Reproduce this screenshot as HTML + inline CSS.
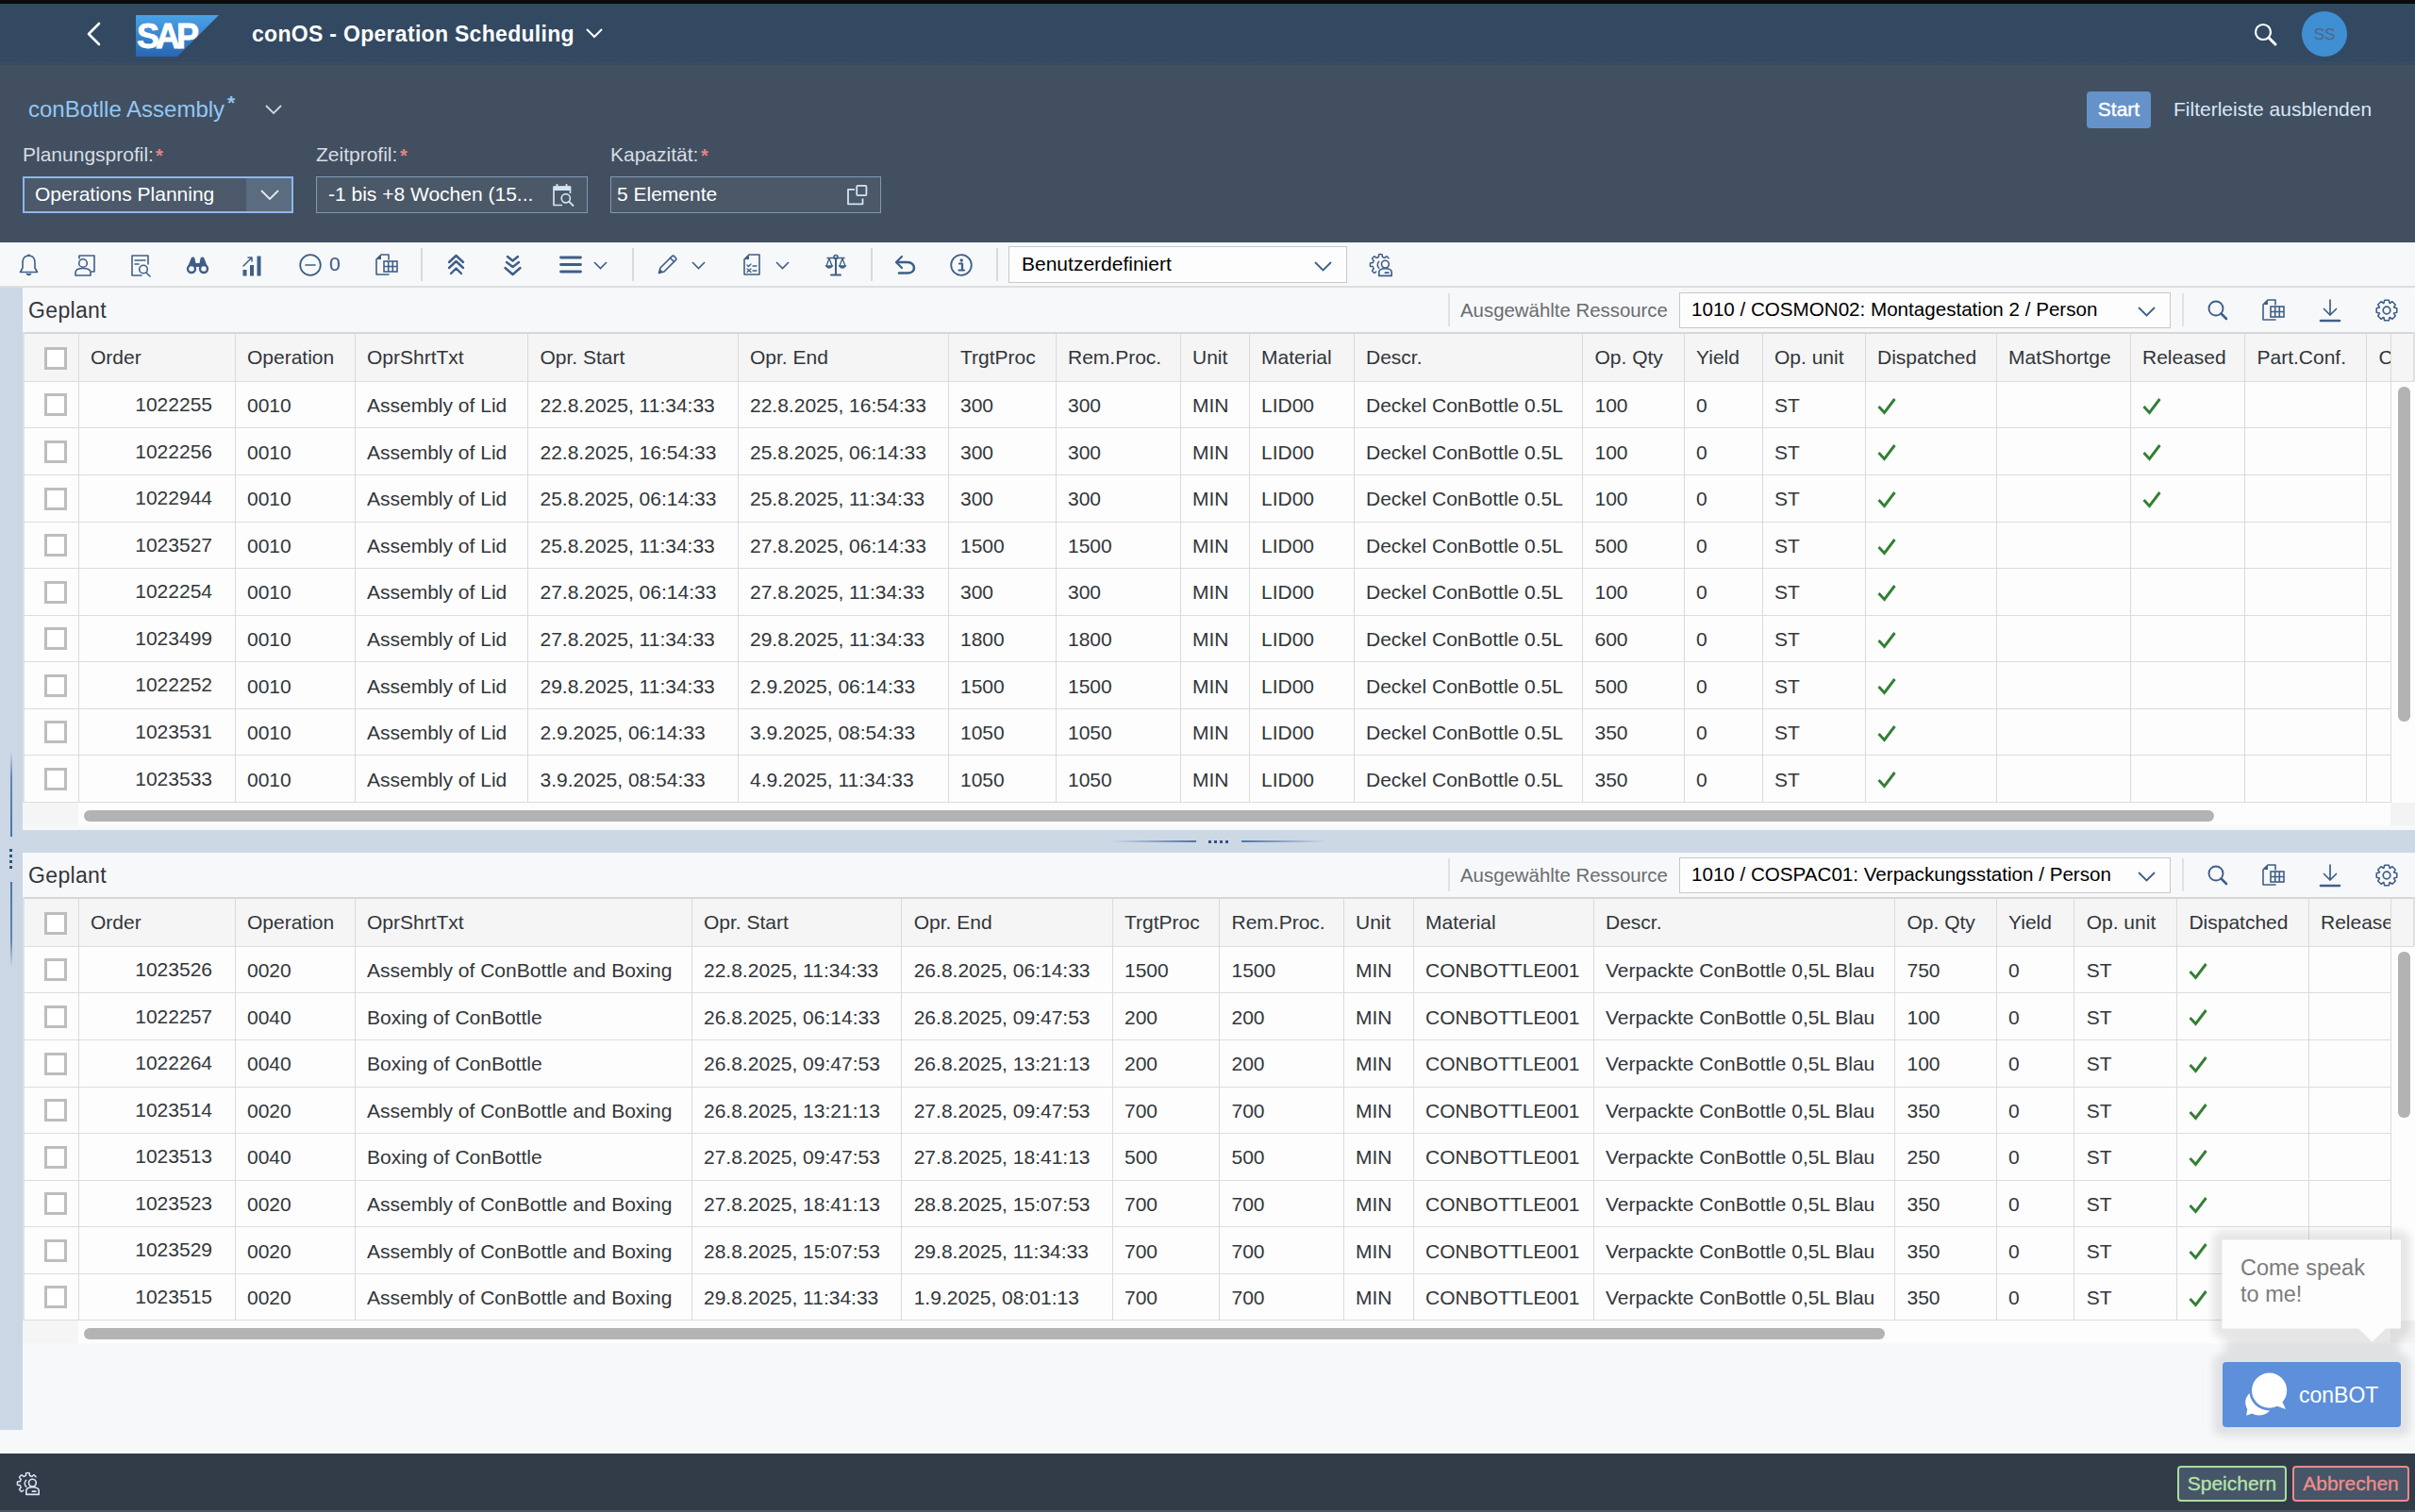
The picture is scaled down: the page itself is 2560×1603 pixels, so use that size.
<!DOCTYPE html><html><head><meta charset="utf-8"><style>
*{box-sizing:border-box;margin:0;padding:0}
html,body{width:2560px;height:1603px;overflow:hidden;background:#f7f8fa;font-family:"Liberation Sans", sans-serif;color:#32363a}
.a{position:absolute}
.t{position:absolute;white-space:nowrap;font-size:21px;line-height:24px}
svg{position:absolute;overflow:visible}
</style></head><body><div class="a" style="left:0;top:0;width:2560px;height:4px;background:#0a0a0a"></div>
<div class="a" style="left:0;top:4px;width:2560px;height:64px;background:#334962"></div>
<div class="a" style="left:0;top:62px;width:2560px;height:7px;background:#364c65"></div>
<div class="a" style="left:0;top:63px;width:2560px;height:2px;background:repeating-linear-gradient(90deg,#314760 0 2px,#364c65 2px 3px)"></div>
<svg style="left:90px;top:22px" width="20" height="28" viewBox="0 0 20 28"><path d="M15 3 L4 14 L15 25" fill="none" stroke="#fff" stroke-width="2.6" stroke-linecap="round" stroke-linejoin="round"/></svg>
<svg style="left:144px;top:16px" width="88" height="44" viewBox="0 0 88 44">
<defs><linearGradient id="sg" x1="0" y1="0" x2="0" y2="1"><stop offset="0" stop-color="#4aa3e6"/><stop offset="1" stop-color="#2866b4"/></linearGradient></defs>
<path d="M0 0 H88 L44 44 H0 Z" fill="url(#sg)"/>
<text x="1" y="35" font-family="Liberation Sans" font-weight="bold" font-size="36" fill="#fff" stroke="#fff" stroke-width="0.8" letter-spacing="-4.0">SAP</text>
</svg>
<div class="t" style="left:267px;top:22px;font-size:23px;line-height:28px;font-weight:bold;color:#fff;letter-spacing:0.3px">conOS - Operation Scheduling</div>
<svg style="left:621px;top:29px" width="18" height="12" viewBox="0 0 18 12"><path d="M1 2 L9 10 L17 2" fill="none" stroke="#fff" stroke-width="2"/></svg>
<svg style="left:2389px;top:24px" width="25" height="25" viewBox="0 0 25 25"><circle cx="10" cy="10" r="8" fill="none" stroke="#fff" stroke-width="2.2"/><path d="M16 16 L23 23" stroke="#fff" stroke-width="3" stroke-linecap="round"/></svg>
<div class="a" style="left:2440px;top:12px;width:48px;height:48px;border-radius:50%;background:#3f8fd2"></div>
<div class="t" style="left:2440px;top:25px;width:48px;text-align:center;font-size:17px;color:#4f6680">SS</div>
<div class="a" style="left:0;top:69px;width:2560px;height:188px;background:#424f60"></div>
<div class="t" style="left:30px;top:101px;font-size:24px;line-height:30px;color:#91c8f6">conBotlle Assembly</div>
<div class="t" style="left:241px;top:97px;font-size:21px;font-weight:bold;color:#91c8f6">*</div>
<svg style="left:281px;top:111px" width="18" height="11" viewBox="0 0 18 11"><path d="M1 1 L9 9 L17 1" fill="none" stroke="#d0d6dd" stroke-width="1.8"/></svg>
<div class="t" style="left:24px;top:152px;color:#d7dde3">Planungsprofil:</div>
<div class="t" style="left:165px;top:153px;font-size:20px;color:#e08585;font-weight:bold">*</div>
<div class="t" style="left:335px;top:152px;color:#d7dde3">Zeitprofil:</div>
<div class="t" style="left:424px;top:153px;font-size:20px;color:#e08585;font-weight:bold">*</div>
<div class="t" style="left:647px;top:152px;color:#d7dde3">Kapazität:</div>
<div class="t" style="left:743px;top:153px;font-size:20px;color:#e08585;font-weight:bold">*</div>
<div class="a" style="left:24px;top:187px;width:287px;height:39px;background:#4b596b;border:2px solid #8cb7ea"></div>
<div class="a" style="left:261px;top:189px;width:48px;height:35px;background:#5b6c80"></div>
<div class="t" style="left:37px;top:194px;color:#fff">Operations Planning</div>
<svg style="left:276px;top:201px" width="20" height="12" viewBox="0 0 20 12"><path d="M1 1 L10 10 L19 1" fill="none" stroke="#e6ebf0" stroke-width="1.8"/></svg>
<div class="a" style="left:335px;top:187px;width:288px;height:39px;background:#4a5868;border:1.5px solid #8199b5"></div>
<div class="t" style="left:348px;top:194px;color:#fff">-1 bis +8 Wochen (15...</div>
<svg style="left:585px;top:194px" width="25" height="25" viewBox="0 0 25 25"><path d="M11 23.5 H2 V4 H19.5 V11" fill="none" stroke="#d3e4f6" stroke-width="1.7" stroke-linejoin="round"/><rect x="2" y="3.5" width="17.5" height="4.5" fill="#d3e4f6"/><path d="M5.5 1 V4 M15.5 1 V4" stroke="#d3e4f6" stroke-width="1.8"/><circle cx="14.8" cy="16.3" r="4.6" fill="none" stroke="#d3e4f6" stroke-width="1.7"/><path d="M18.2 19.7 L22.5 24" stroke="#d3e4f6" stroke-width="1.8" stroke-linecap="round"/></svg>
<div class="a" style="left:647px;top:187px;width:287px;height:39px;background:#4a5868;border:1.5px solid #8199b5"></div>
<div class="t" style="left:654px;top:194px;color:#fff">5 Elemente</div>
<svg style="left:897px;top:196px" width="23" height="22" viewBox="0 0 23 22"><path d="M9 4.8 H2 V20.3 H17.5 V14.5" fill="none" stroke="#d3e4f6" stroke-width="1.8" stroke-linejoin="round"/><rect x="11.2" y="0.9" width="10.2" height="10.2" rx="1" fill="none" stroke="#d3e4f6" stroke-width="1.8"/></svg>
<div class="a" style="left:2212px;top:97px;width:68px;height:39px;border-radius:4px;background:#6593c9"></div>
<div class="t" style="left:2212px;top:104px;width:68px;text-align:center;color:#fff;-webkit-text-stroke:0.4px #fff">Start</div>
<div class="t" style="left:2304px;top:104px;color:#d6e7f8">Filterleiste ausblenden</div>
<div class="a" style="left:0;top:257px;width:2560px;height:47px;background:#f7f8fa"></div>
<div class="a" style="left:0;top:303px;width:2560px;height:2px;background:#dcdee0"></div>
<svg style="left:20px;top:269px" width="21" height="24" viewBox="0 0 21 24"><path d="M10.5 2 C5.5 2 4 6 4 10 V15 L1.5 19.5 H19.5 L17 15 V10 C17 6 15.5 2 10.5 2 Z" fill="none" stroke="#3e5f87" stroke-linecap="round" stroke-linejoin="round" stroke-width="1.6"/><path d="M8 21 Q10.5 24 13 21" fill="#3e5f87" stroke="#3e5f87" stroke-width="1.5"/><circle cx="10.5" cy="1.8" r="1.4" fill="#3e5f87"/></svg>
<svg style="left:79px;top:270px" width="22" height="23" viewBox="0 0 22 23"><path d="M5 4 V1 H21 V18 H18" fill="none" stroke="#3e5f87" stroke-linecap="round" stroke-linejoin="round" stroke-width="1.6"/><circle cx="9" cy="9" r="4.3" fill="none" stroke="#3e5f87" stroke-linecap="round" stroke-linejoin="round" stroke-width="1.6"/><path d="M1 22 V19 C1 15.5 4 14.5 9 14.5 C14 14.5 17 15.5 17 19 V22 Z" fill="none" stroke="#3e5f87" stroke-linecap="round" stroke-linejoin="round" stroke-width="1.6"/></svg>
<svg style="left:139px;top:270px" width="22" height="23" viewBox="0 0 22 23"><path d="M11 22 H1 V1 H18 V10" fill="none" stroke="#3e5f87" stroke-linecap="round" stroke-linejoin="round" stroke-width="1.6"/><path d="M4 6 H15 M4 10 H8" fill="none" stroke="#3e5f87" stroke-linecap="round" stroke-linejoin="round" stroke-width="1.6"/><circle cx="13" cy="15.5" r="4.3" fill="none" stroke="#3e5f87" stroke-linecap="round" stroke-linejoin="round" stroke-width="1.6"/><path d="M16 19 L20 23" fill="none" stroke="#3e5f87" stroke-linecap="round" stroke-linejoin="round" stroke-width="1.6"/></svg>
<svg style="left:197px;top:271px" width="25" height="19" viewBox="0 0 25 19"><path d="M2 12 L5.5 3 C6 1 9 1 9.5 3 L10.5 8 H14.5 L15.5 3 C16 1 19 1 19.5 3 L23 12 Z" fill="#3e5f87"/><circle cx="6" cy="14" r="4" fill="#f7f8fa" stroke="#3e5f87" stroke-width="2.4"/><circle cx="19" cy="14" r="4" fill="#f7f8fa" stroke="#3e5f87" stroke-width="2.4"/></svg>
<svg style="left:257px;top:271px" width="21" height="22" viewBox="0 0 21 22"><rect x="0.5" y="15" width="4" height="6.5" fill="#3e5f87"/><rect x="8" y="10" width="4" height="11.5" fill="#3e5f87"/><rect x="15.5" y="0.5" width="4" height="21" fill="#3e5f87"/><path d="M1 11 L10 2 M6 2 H10 V6" fill="none" stroke="#3e5f87" stroke-linecap="round" stroke-linejoin="round" stroke-width="1.5"/></svg>
<svg style="left:317px;top:269px" width="25" height="24" viewBox="0 0 25 24"><circle cx="12" cy="12" r="10.8" fill="none" stroke="#3e5f87" stroke-linecap="round" stroke-linejoin="round" stroke-width="1.8"/><path d="M7 12 H17" fill="none" stroke="#3e5f87" stroke-linecap="round" stroke-linejoin="round" stroke-width="1.6"/></svg>
<div class="t" style="left:349px;top:268px;font-size:21px;color:#3b5b80">0</div>
<svg style="left:398px;top:269px" width="24" height="24" viewBox="0 0 24 24"><path d="M6 1 H14 V6 M6 1 L1 6 V22 H14" fill="none" stroke="#3e5f87" stroke-linecap="round" stroke-linejoin="round" stroke-width="1.6"/><path d="M6 1 V6 H1" fill="#3e5f87"/><rect x="9" y="8" width="14" height="11" fill="#f7f8fa" stroke="#3e5f87" stroke-width="1.6"/><path d="M9 13.5 H23 M13.7 8 V19 M18.3 8 V19" stroke="#3e5f87" stroke-width="1.6"/></svg>
<div class="a" style="left:446px;top:263px;width:1.5px;height:35px;background:#d8dadd"></div>
<svg style="left:474px;top:269px" width="19" height="23" viewBox="0 0 19 23"><path d="M2 9 L9.5 2 L17 9 M2 15 L9.5 8 L17 15 M4 21 L9.5 15.5 L15 21" fill="none" stroke="#3e5f87" stroke-linecap="round" stroke-linejoin="round" stroke-width="2.4"/></svg>
<svg style="left:534px;top:270px" width="19" height="23" viewBox="0 0 19 23"><path d="M4 2 L9.5 6.5 L15 2 M3 8 L9.5 13 L16 8 M1.5 14 L9.5 21 L17.5 14" fill="none" stroke="#3e5f87" stroke-linecap="round" stroke-linejoin="round" stroke-width="2.4"/></svg>
<svg style="left:593px;top:271px" width="24" height="19" viewBox="0 0 24 19"><path d="M1.5 2 H22.5 M1.5 9.5 H22.5 M1.5 17 H22.5" fill="none" stroke="#3e5f87" stroke-linecap="round" stroke-linejoin="round" stroke-width="2.8"/></svg>
<svg style="left:629px;top:277px" width="15" height="9" viewBox="0 0 15 9"><path d="M1 1 L7.5 7.5 L14 1" fill="none" stroke="#3e5f87" stroke-width="1.6"/></svg>
<div class="a" style="left:670px;top:263px;width:1.5px;height:35px;background:#d8dadd"></div>
<svg style="left:697px;top:270px" width="21" height="21" viewBox="0 0 21 21"><path d="M1.5 19.5 L3 14 L15 2 C16 1 17 1 18 2 L19 3 C20 4 20 5 19 6 L7 18 Z" fill="none" stroke="#3e5f87" stroke-linecap="round" stroke-linejoin="round" stroke-width="1.7"/><path d="M1 20 L2.5 15 L6 18.5 Z" fill="#3e5f87"/><path d="M13.5 3.5 L17.5 7.5" fill="none" stroke="#3e5f87" stroke-linecap="round" stroke-linejoin="round" stroke-width="1.7"/></svg>
<svg style="left:733px;top:277px" width="15" height="9" viewBox="0 0 15 9"><path d="M1 1 L7.5 7.5 L14 1" fill="none" stroke="#3e5f87" stroke-width="1.6"/></svg>
<svg style="left:788px;top:269px" width="19" height="24" viewBox="0 0 19 24"><path d="M6 1 H17 V22 H1 V6 Z" fill="none" stroke="#3e5f87" stroke-linecap="round" stroke-linejoin="round" stroke-width="1.6"/><path d="M6 1 V6 H1" fill="#3e5f87"/><path d="M4 12 L5.5 13.5 L8 11 M4 16 L8 19.5 M8 16 L4 19.5 M10 13 H14 M10 18 H14" fill="none" stroke="#3e5f87" stroke-linecap="round" stroke-linejoin="round" stroke-width="1.3"/></svg>
<svg style="left:822px;top:277px" width="15" height="9" viewBox="0 0 15 9"><path d="M1 1 L7.5 7.5 L14 1" fill="none" stroke="#3e5f87" stroke-width="1.6"/></svg>
<svg style="left:875px;top:269px" width="22" height="24" viewBox="0 0 22 24"><path d="M11 5 V22 M6 22.5 H16" fill="none" stroke="#3e5f87" stroke-linecap="round" stroke-linejoin="round" stroke-width="2"/><circle cx="11" cy="3.5" r="2" fill="none" stroke="#3e5f87" stroke-linecap="round" stroke-linejoin="round" stroke-width="1.6"/><path d="M2 4.5 H20" fill="none" stroke="#3e5f87" stroke-linecap="round" stroke-linejoin="round" stroke-width="1.5"/><path d="M4 5 L1 13 M4 5 L7 13 M18 5 L15 13 M18 5 L21 13" fill="none" stroke="#3e5f87" stroke-linecap="round" stroke-linejoin="round" stroke-width="1.3"/><path d="M0.8 13 Q4 17 7.2 13 Z M14.8 13 Q18 17 21.2 13 Z" fill="#3e5f87" stroke="#3e5f87" stroke-width="1.3"/></svg>
<div class="a" style="left:923px;top:263px;width:1.5px;height:35px;background:#d8dadd"></div>
<svg style="left:948px;top:270px" width="23" height="21" viewBox="0 0 23 21"><path d="M8 2 L2 8 L8 14" fill="none" stroke="#3e5f87" stroke-linecap="round" stroke-linejoin="round" stroke-width="2.2"/><path d="M2.5 8 H14 C18.5 8 21 11 21 14 C21 17 18.5 19.5 14 19.5 H5" fill="none" stroke="#3e5f87" stroke-linecap="round" stroke-linejoin="round" stroke-width="2.6"/></svg>
<svg style="left:1007px;top:269px" width="25" height="24" viewBox="0 0 25 24"><circle cx="12" cy="12" r="10.8" fill="none" stroke="#3e5f87" stroke-linecap="round" stroke-linejoin="round" stroke-width="1.8"/><circle cx="12.2" cy="7" r="1.7" fill="#3e5f87"/><path d="M10 10.5 H13 V17.5 M9.5 17.5 H15" fill="none" stroke="#3e5f87" stroke-linecap="round" stroke-linejoin="round" stroke-width="2.2" stroke-linecap="butt"/></svg>
<div class="a" style="left:1056px;top:263px;width:1.5px;height:35px;background:#d8dadd"></div>
<div class="a" style="left:1069px;top:261px;width:359px;height:39px;background:#fdfdfd;border:1.5px solid #c6c8ca"></div>
<div class="t" style="left:1083px;top:268px;color:#000">Benutzerdefiniert</div>
<svg style="left:1393px;top:277px" width="19" height="11" viewBox="0 0 19 11"><path d="M1 1 L9.5 9.5 L18 1" fill="none" stroke="#3e5f87" stroke-width="1.8"/></svg>
<svg style="left:1452px;top:269px" width="24" height="24" viewBox="0 0 24 24"><path d="M6.72 19.10 L6.29 19.47 L5.85 19.82 L5.40 20.17 L4.93 20.50 L4.78 20.38 L4.63 20.27 L4.48 20.15 L4.33 20.03 L4.18 19.90 L4.04 19.77 L3.90 19.64 L3.76 19.51 L3.62 19.38 L3.49 19.24 L3.36 19.10 L3.23 18.96 L3.10 18.82 L2.97 18.67 L2.85 18.52 L2.73 18.37 L2.62 18.22 L2.50 18.07 L2.83 17.60 L3.18 17.15 L3.53 16.71 L3.90 16.28 L4.29 15.87 L4.21 15.75 L4.14 15.62 L4.07 15.50 L4.00 15.37 L3.94 15.24 L3.88 15.11 L3.82 14.98 L3.76 14.84 L3.70 14.71 L3.65 14.57 L3.60 14.44 L3.55 14.30 L3.51 14.16 L3.46 14.03 L3.42 13.89 L3.38 13.75 L3.35 13.61 L2.79 13.59 L2.22 13.55 L1.66 13.49 L1.10 13.42 L0.54 13.32 L0.51 13.13 L0.48 12.94 L0.46 12.75 L0.44 12.56 L0.43 12.37 L0.42 12.18 L0.41 11.98 L0.40 11.79 L0.40 11.60 L0.40 11.41 L0.41 11.22 L0.42 11.02 L0.43 10.83 L0.44 10.64 L0.46 10.45 L0.48 10.26 L0.51 10.07 L0.54 9.88 L1.10 9.78 L1.66 9.71 L2.22 9.65 L2.79 9.61 L3.35 9.59 L3.38 9.45 L3.42 9.31 L3.46 9.17 L3.51 9.04 L3.55 8.90 L3.60 8.76 L3.65 8.63 L3.70 8.49 L3.76 8.36 L3.82 8.22 L3.88 8.09 L3.94 7.96 L4.00 7.83 L4.07 7.70 L4.14 7.58 L4.21 7.45 L4.29 7.33 L3.90 6.92 L3.53 6.49 L3.18 6.05 L2.83 5.60 L2.50 5.13 L2.62 4.98 L2.73 4.83 L2.85 4.68 L2.97 4.53 L3.10 4.38 L3.23 4.24 L3.36 4.10 L3.49 3.96 L3.62 3.82 L3.76 3.69 L3.90 3.56 L4.04 3.43 L4.18 3.30 L4.33 3.17 L4.48 3.05 L4.63 2.93 L4.78 2.82 L4.93 2.70 L5.40 3.03 L5.85 3.38 L6.29 3.73 L6.72 4.10 L7.13 4.49 L7.25 4.41 L7.38 4.34 L7.50 4.27 L7.63 4.20 L7.76 4.14 L7.89 4.08 L8.02 4.02 L8.16 3.96 L8.29 3.90 L8.43 3.85 L8.56 3.80 L8.70 3.75 L8.84 3.71 L8.97 3.66 L9.11 3.62 L9.25 3.58 L9.39 3.55 L9.41 2.99 L9.45 2.42 L9.51 1.86 L9.58 1.30 L9.68 0.74 L9.87 0.71 L10.06 0.68 L10.25 0.66 L10.44 0.64 L10.63 0.63 L10.82 0.62 L11.02 0.61 L11.21 0.60 L11.40 0.60 L11.59 0.60 L11.78 0.61 L11.98 0.62 L12.17 0.63 L12.36 0.64 L12.55 0.66 L12.74 0.68 L12.93 0.71 L13.12 0.74 L13.22 1.30 L13.29 1.86 L13.35 2.42 L13.39 2.99 L13.41 3.55 L13.55 3.58 L13.69 3.62 L13.83 3.66 L13.96 3.71 L14.10 3.75 L14.24 3.80 L14.37 3.85 L14.51 3.90 L14.64 3.96 L14.78 4.02 L14.91 4.08 L15.04 4.14 L15.17 4.20 L15.30 4.27 L15.42 4.34 L15.55 4.41 L15.67 4.49 L16.08 4.10 L16.51 3.73 L16.95 3.38 L17.40 3.03 L17.87 2.70 L18.02 2.82 L18.17 2.93 L18.32 3.05 L18.47 3.17 L18.62 3.30 L18.76 3.43 L18.90 3.56 L19.04 3.69 L19.18 3.82 L19.31 3.96 L19.44 4.10 L19.57 4.24 L19.70 4.38 L19.83 4.53 L19.95 4.68 L20.07 4.83" fill="none" stroke="#3e5f87" stroke-linecap="round" stroke-linejoin="round" stroke-width="1.5"/><path d="M9.8 8.3 A4.6 4.6 0 0 0 9.8 15.2" fill="none" stroke="#3e5f87" stroke-linecap="round" stroke-linejoin="round" stroke-width="1.5"/><circle cx="16.4" cy="11.1" r="3.9" fill="none" stroke="#3e5f87" stroke-linecap="round" stroke-linejoin="round" stroke-width="1.6"/><path d="M9.8 23.4 V19.5 C9.8 17 12 15.8 16.4 15.8 C20.8 15.8 23.2 17 23.2 19.5 V23.4 Z" fill="none" stroke="#3e5f87" stroke-linecap="round" stroke-linejoin="round" stroke-width="1.6"/><path d="M16.4 20.2 H19.8" fill="none" stroke="#3e5f87" stroke-linecap="round" stroke-linejoin="round" stroke-width="1.7"/></svg>
<div class="a" style="left:0;top:305px;width:24px;height:1211px;background:#cbd7e5"></div>
<div class="a" style="left:11px;top:797px;width:1.5px;height:90px;background:linear-gradient(#cbd7e5,#5f86b3 30%,#4a76a8)"></div>
<div class="a" style="left:10px;top:900px;width:3px;height:3px;background:#2f5581"></div>
<div class="a" style="left:10px;top:906px;width:3px;height:3px;background:#2f5581"></div>
<div class="a" style="left:10px;top:912px;width:3px;height:3px;background:#2f5581"></div>
<div class="a" style="left:10px;top:918px;width:3px;height:3px;background:#2f5581"></div>
<div class="a" style="left:11px;top:935px;width:1.5px;height:90px;background:linear-gradient(#4a76a8,#5f86b3 70%,#cbd7e5)"></div>
<div class="a" style="left:24px;top:305px;width:2536px;height:47px;background:#f7f8fa"></div>
<div class="t" style="left:30px;top:316px;font-size:23px;line-height:26px;letter-spacing:0.35px;color:#32363a">Geplant</div>
<div class="a" style="left:1535px;top:311px;width:1.5px;height:35px;background:#dfe1e3"></div>
<div class="t" style="left:1548px;top:316.5px;font-size:20.4px;color:#6a6d70">Ausgewählte Ressource</div>
<div class="a" style="left:1780px;top:310px;width:521px;height:38px;background:#fdfdfd;border:1.5px solid #c6c8ca"></div>
<div class="t" style="left:1793px;top:316px;font-size:20.6px;color:#000">1010 / COSMON02: Montagestation 2 / Person</div>
<svg style="left:2266px;top:325px" width="19" height="11" viewBox="0 0 19 11"><path d="M1 1 L9.5 9.5 L18 1" fill="none" stroke="#3e5f87" stroke-width="1.8"/></svg>
<div class="a" style="left:2313px;top:311px;width:1.5px;height:35px;background:#dfe1e3"></div>
<svg style="left:2340px;top:318px" width="22" height="22" viewBox="0 0 22 22"><circle cx="9" cy="9" r="7.5" fill="none" stroke="#3e5f87" stroke-linecap="round" stroke-linejoin="round" stroke-width="1.9"/><path d="M14.5 14.5 L20 20" fill="none" stroke="#3e5f87" stroke-linecap="round" stroke-linejoin="round" stroke-width="2.6"/></svg>
<svg style="left:2398px;top:317px" width="24" height="24" viewBox="0 0 24 24"><path d="M6 1 H14 V6 M6 1 L1 6 V22 H14" fill="none" stroke="#3e5f87" stroke-linecap="round" stroke-linejoin="round" stroke-width="1.6"/><path d="M6 1 V6 H1" fill="#3e5f87"/><rect x="9" y="8" width="14" height="11" fill="#f7f8fa" stroke="#3e5f87" stroke-width="1.6"/><path d="M9 13.5 H23 M13.7 8 V19 M18.3 8 V19" stroke="#3e5f87" stroke-width="1.6"/></svg>
<svg style="left:2458px;top:317px" width="24" height="24" viewBox="0 0 24 24"><path d="M12 1 V17 M5.5 10.5 L12 17 L18.5 10.5" fill="none" stroke="#3e5f87" stroke-linecap="round" stroke-linejoin="round" stroke-width="1.7"/><path d="M2 23 H22" fill="none" stroke="#3e5f87" stroke-linecap="round" stroke-linejoin="round" stroke-width="2.6"/></svg>
<svg style="left:2518px;top:317px" width="24" height="24" viewBox="0 0 24 24"><path d="M22.76 9.71 L22.76 14.29 L19.60 15.07 L19.55 15.20 L21.23 17.99 L17.99 21.23 L15.20 19.55 L15.07 19.60 L14.29 22.76 L9.71 22.76 L8.93 19.60 L8.80 19.55 L6.01 21.23 L2.77 17.99 L4.45 15.20 L4.40 15.07 L1.24 14.29 L1.24 9.71 L4.40 8.93 L4.45 8.80 L2.77 6.01 L6.01 2.77 L8.80 4.45 L8.93 4.40 L9.71 1.24 L14.29 1.24 L15.07 4.40 L15.20 4.45 L17.99 2.77 L21.23 6.01 L19.55 8.80 L19.60 8.93 Z" fill="none" stroke="#3e5f87" stroke-linecap="round" stroke-linejoin="round" stroke-width="1.6"/><circle cx="12" cy="12" r="3.8" fill="none" stroke="#3e5f87" stroke-linecap="round" stroke-linejoin="round" stroke-width="1.7"/></svg>
<div class="a" style="left:24px;top:352px;width:2536px;height:52.4px;background:#f5f5f5"></div>
<div class="a" style="left:24px;top:352px;width:2536px;height:2px;background:#d5d7d9"></div>
<div class="a" style="left:24px;top:404.4px;width:2536px;height:446.13px;background:#fdfdfd"></div>
<div class="a" style="left:24px;top:404px;width:2535px;height:1px;background:#dcdcdc"></div>
<div class="a" style="left:24px;top:453px;width:2510px;height:1px;background:#dcdcdc"></div>
<div class="a" style="left:24px;top:503px;width:2510px;height:1px;background:#dcdcdc"></div>
<div class="a" style="left:24px;top:553px;width:2510px;height:1px;background:#dcdcdc"></div>
<div class="a" style="left:24px;top:602px;width:2510px;height:1px;background:#dcdcdc"></div>
<div class="a" style="left:24px;top:652px;width:2510px;height:1px;background:#dcdcdc"></div>
<div class="a" style="left:24px;top:701px;width:2510px;height:1px;background:#dcdcdc"></div>
<div class="a" style="left:24px;top:751px;width:2510px;height:1px;background:#dcdcdc"></div>
<div class="a" style="left:24px;top:800px;width:2510px;height:1px;background:#dcdcdc"></div>
<div class="a" style="left:24px;top:850px;width:2510px;height:1px;background:#dcdcdc"></div>
<div class="a" style="left:24px;top:352px;width:1.5px;height:498.53px;background:#e0e0e0"></div>
<div class="a" style="left:83px;top:352px;width:1px;height:498.53px;background:#dadada"></div>
<div class="a" style="left:249px;top:352px;width:1px;height:498.53px;background:#dadada"></div>
<div class="a" style="left:376px;top:352px;width:1px;height:498.53px;background:#dadada"></div>
<div class="a" style="left:559px;top:352px;width:1px;height:498.53px;background:#dadada"></div>
<div class="a" style="left:782px;top:352px;width:1px;height:498.53px;background:#dadada"></div>
<div class="a" style="left:1005px;top:352px;width:1px;height:498.53px;background:#dadada"></div>
<div class="a" style="left:1119px;top:352px;width:1px;height:498.53px;background:#dadada"></div>
<div class="a" style="left:1251px;top:352px;width:1px;height:498.53px;background:#dadada"></div>
<div class="a" style="left:1324px;top:352px;width:1px;height:498.53px;background:#dadada"></div>
<div class="a" style="left:1435px;top:352px;width:1px;height:498.53px;background:#dadada"></div>
<div class="a" style="left:1677px;top:352px;width:1px;height:498.53px;background:#dadada"></div>
<div class="a" style="left:1785px;top:352px;width:1px;height:498.53px;background:#dadada"></div>
<div class="a" style="left:1868px;top:352px;width:1px;height:498.53px;background:#dadada"></div>
<div class="a" style="left:1977px;top:352px;width:1px;height:498.53px;background:#dadada"></div>
<div class="a" style="left:2116px;top:352px;width:1px;height:498.53px;background:#dadada"></div>
<div class="a" style="left:2258px;top:352px;width:1px;height:498.53px;background:#dadada"></div>
<div class="a" style="left:2379px;top:352px;width:1px;height:498.53px;background:#dadada"></div>
<div class="a" style="left:2508px;top:352px;width:1px;height:498.53px;background:#dadada"></div>
<div class="a" style="left:2534px;top:352px;width:1px;height:498.53px;background:#dadada"></div>
<div class="a" style="left:2558px;top:352px;width:1.5px;height:52.4px;background:#e0e0e0"></div>
<div class="a" style="left:47px;top:368.0px;width:24px;height:24px;background:#fff;border:3px solid #bdbdbd"></div>
<div class="t" style="left:96px;top:366.8px;color:#32363a">Order</div>
<div class="t" style="left:262px;top:366.8px;color:#32363a">Operation</div>
<div class="t" style="left:389px;top:366.8px;color:#32363a">OprShrtTxt</div>
<div class="t" style="left:572.5px;top:366.8px;color:#32363a">Opr. Start</div>
<div class="t" style="left:795px;top:366.8px;color:#32363a">Opr. End</div>
<div class="t" style="left:1018px;top:366.8px;color:#32363a">TrgtProc</div>
<div class="t" style="left:1132px;top:366.8px;color:#32363a">Rem.Proc.</div>
<div class="t" style="left:1264px;top:366.8px;color:#32363a">Unit</div>
<div class="t" style="left:1337px;top:366.8px;color:#32363a">Material</div>
<div class="t" style="left:1448px;top:366.8px;color:#32363a">Descr.</div>
<div class="t" style="left:1690.5px;top:366.8px;color:#32363a">Op. Qty</div>
<div class="t" style="left:1798px;top:366.8px;color:#32363a">Yield</div>
<div class="t" style="left:1881px;top:366.8px;color:#32363a">Op. unit</div>
<div class="t" style="left:1990px;top:366.8px;color:#32363a">Dispatched</div>
<div class="t" style="left:2129px;top:366.8px;color:#32363a">MatShortge</div>
<div class="t" style="left:2271px;top:366.8px;color:#32363a">Released</div>
<div class="t" style="left:2392.5px;top:366.8px;color:#32363a">Part.Conf.</div>
<div class="t" style="left:2521.5px;top:366.8px;width:12.5px;overflow:hidden;color:#32363a">C</div>
<div class="a" style="left:47px;top:417.4px;width:24px;height:24px;background:#fff;border:3px solid #bdbdbd"></div>
<div class="t" style="left:83px;width:142px;text-align:right;top:417.0px;color:#32363a">1022255</div>
<div class="t" style="left:262px;top:418.1px;color:#32363a">0010</div>
<div class="t" style="left:389px;top:418.1px;color:#32363a">Assembly of Lid</div>
<div class="t" style="left:572.5px;top:418.1px;color:#32363a">22.8.2025, 11:34:33</div>
<div class="t" style="left:795px;top:418.1px;color:#32363a">22.8.2025, 16:54:33</div>
<div class="t" style="left:1018px;top:418.1px;color:#32363a">300</div>
<div class="t" style="left:1132px;top:418.1px;color:#32363a">300</div>
<div class="t" style="left:1264px;top:418.1px;color:#32363a">MIN</div>
<div class="t" style="left:1337px;top:418.1px;color:#32363a">LID00</div>
<div class="t" style="left:1448px;top:418.1px;color:#32363a">Deckel ConBottle 0.5L</div>
<div class="t" style="left:1690.5px;top:418.1px;color:#32363a">100</div>
<div class="t" style="left:1798px;top:418.1px;color:#32363a">0</div>
<div class="t" style="left:1881px;top:418.1px;color:#32363a">ST</div>
<svg style="left:1990px;top:421px" width="20" height="18" viewBox="0 0 20 18"><path d="M1.5 10 L7.5 16.5 L18.5 2" fill="none" stroke="#337f35" stroke-width="2.9" stroke-linejoin="miter"/></svg>
<svg style="left:2271px;top:421px" width="20" height="18" viewBox="0 0 20 18"><path d="M1.5 10 L7.5 16.5 L18.5 2" fill="none" stroke="#337f35" stroke-width="2.9" stroke-linejoin="miter"/></svg>
<div class="a" style="left:47px;top:467.0px;width:24px;height:24px;background:#fff;border:3px solid #bdbdbd"></div>
<div class="t" style="left:83px;width:142px;text-align:right;top:466.6px;color:#32363a">1022256</div>
<div class="t" style="left:262px;top:467.7px;color:#32363a">0010</div>
<div class="t" style="left:389px;top:467.7px;color:#32363a">Assembly of Lid</div>
<div class="t" style="left:572.5px;top:467.7px;color:#32363a">22.8.2025, 16:54:33</div>
<div class="t" style="left:795px;top:467.7px;color:#32363a">25.8.2025, 06:14:33</div>
<div class="t" style="left:1018px;top:467.7px;color:#32363a">300</div>
<div class="t" style="left:1132px;top:467.7px;color:#32363a">300</div>
<div class="t" style="left:1264px;top:467.7px;color:#32363a">MIN</div>
<div class="t" style="left:1337px;top:467.7px;color:#32363a">LID00</div>
<div class="t" style="left:1448px;top:467.7px;color:#32363a">Deckel ConBottle 0.5L</div>
<div class="t" style="left:1690.5px;top:467.7px;color:#32363a">100</div>
<div class="t" style="left:1798px;top:467.7px;color:#32363a">0</div>
<div class="t" style="left:1881px;top:467.7px;color:#32363a">ST</div>
<svg style="left:1990px;top:470px" width="20" height="18" viewBox="0 0 20 18"><path d="M1.5 10 L7.5 16.5 L18.5 2" fill="none" stroke="#337f35" stroke-width="2.9" stroke-linejoin="miter"/></svg>
<svg style="left:2271px;top:470px" width="20" height="18" viewBox="0 0 20 18"><path d="M1.5 10 L7.5 16.5 L18.5 2" fill="none" stroke="#337f35" stroke-width="2.9" stroke-linejoin="miter"/></svg>
<div class="a" style="left:47px;top:516.5px;width:24px;height:24px;background:#fff;border:3px solid #bdbdbd"></div>
<div class="t" style="left:83px;width:142px;text-align:right;top:516.1px;color:#32363a">1022944</div>
<div class="t" style="left:262px;top:517.2px;color:#32363a">0010</div>
<div class="t" style="left:389px;top:517.2px;color:#32363a">Assembly of Lid</div>
<div class="t" style="left:572.5px;top:517.2px;color:#32363a">25.8.2025, 06:14:33</div>
<div class="t" style="left:795px;top:517.2px;color:#32363a">25.8.2025, 11:34:33</div>
<div class="t" style="left:1018px;top:517.2px;color:#32363a">300</div>
<div class="t" style="left:1132px;top:517.2px;color:#32363a">300</div>
<div class="t" style="left:1264px;top:517.2px;color:#32363a">MIN</div>
<div class="t" style="left:1337px;top:517.2px;color:#32363a">LID00</div>
<div class="t" style="left:1448px;top:517.2px;color:#32363a">Deckel ConBottle 0.5L</div>
<div class="t" style="left:1690.5px;top:517.2px;color:#32363a">100</div>
<div class="t" style="left:1798px;top:517.2px;color:#32363a">0</div>
<div class="t" style="left:1881px;top:517.2px;color:#32363a">ST</div>
<svg style="left:1990px;top:520px" width="20" height="18" viewBox="0 0 20 18"><path d="M1.5 10 L7.5 16.5 L18.5 2" fill="none" stroke="#337f35" stroke-width="2.9" stroke-linejoin="miter"/></svg>
<svg style="left:2271px;top:520px" width="20" height="18" viewBox="0 0 20 18"><path d="M1.5 10 L7.5 16.5 L18.5 2" fill="none" stroke="#337f35" stroke-width="2.9" stroke-linejoin="miter"/></svg>
<div class="a" style="left:47px;top:566.1px;width:24px;height:24px;background:#fff;border:3px solid #bdbdbd"></div>
<div class="t" style="left:83px;width:142px;text-align:right;top:565.7px;color:#32363a">1023527</div>
<div class="t" style="left:262px;top:566.8px;color:#32363a">0010</div>
<div class="t" style="left:389px;top:566.8px;color:#32363a">Assembly of Lid</div>
<div class="t" style="left:572.5px;top:566.8px;color:#32363a">25.8.2025, 11:34:33</div>
<div class="t" style="left:795px;top:566.8px;color:#32363a">27.8.2025, 06:14:33</div>
<div class="t" style="left:1018px;top:566.8px;color:#32363a">1500</div>
<div class="t" style="left:1132px;top:566.8px;color:#32363a">1500</div>
<div class="t" style="left:1264px;top:566.8px;color:#32363a">MIN</div>
<div class="t" style="left:1337px;top:566.8px;color:#32363a">LID00</div>
<div class="t" style="left:1448px;top:566.8px;color:#32363a">Deckel ConBottle 0.5L</div>
<div class="t" style="left:1690.5px;top:566.8px;color:#32363a">500</div>
<div class="t" style="left:1798px;top:566.8px;color:#32363a">0</div>
<div class="t" style="left:1881px;top:566.8px;color:#32363a">ST</div>
<svg style="left:1990px;top:570px" width="20" height="18" viewBox="0 0 20 18"><path d="M1.5 10 L7.5 16.5 L18.5 2" fill="none" stroke="#337f35" stroke-width="2.9" stroke-linejoin="miter"/></svg>
<div class="a" style="left:47px;top:615.7px;width:24px;height:24px;background:#fff;border:3px solid #bdbdbd"></div>
<div class="t" style="left:83px;width:142px;text-align:right;top:615.3px;color:#32363a">1022254</div>
<div class="t" style="left:262px;top:616.4px;color:#32363a">0010</div>
<div class="t" style="left:389px;top:616.4px;color:#32363a">Assembly of Lid</div>
<div class="t" style="left:572.5px;top:616.4px;color:#32363a">27.8.2025, 06:14:33</div>
<div class="t" style="left:795px;top:616.4px;color:#32363a">27.8.2025, 11:34:33</div>
<div class="t" style="left:1018px;top:616.4px;color:#32363a">300</div>
<div class="t" style="left:1132px;top:616.4px;color:#32363a">300</div>
<div class="t" style="left:1264px;top:616.4px;color:#32363a">MIN</div>
<div class="t" style="left:1337px;top:616.4px;color:#32363a">LID00</div>
<div class="t" style="left:1448px;top:616.4px;color:#32363a">Deckel ConBottle 0.5L</div>
<div class="t" style="left:1690.5px;top:616.4px;color:#32363a">100</div>
<div class="t" style="left:1798px;top:616.4px;color:#32363a">0</div>
<div class="t" style="left:1881px;top:616.4px;color:#32363a">ST</div>
<svg style="left:1990px;top:619px" width="20" height="18" viewBox="0 0 20 18"><path d="M1.5 10 L7.5 16.5 L18.5 2" fill="none" stroke="#337f35" stroke-width="2.9" stroke-linejoin="miter"/></svg>
<div class="a" style="left:47px;top:665.2px;width:24px;height:24px;background:#fff;border:3px solid #bdbdbd"></div>
<div class="t" style="left:83px;width:142px;text-align:right;top:664.9px;color:#32363a">1023499</div>
<div class="t" style="left:262px;top:666.0px;color:#32363a">0010</div>
<div class="t" style="left:389px;top:666.0px;color:#32363a">Assembly of Lid</div>
<div class="t" style="left:572.5px;top:666.0px;color:#32363a">27.8.2025, 11:34:33</div>
<div class="t" style="left:795px;top:666.0px;color:#32363a">29.8.2025, 11:34:33</div>
<div class="t" style="left:1018px;top:666.0px;color:#32363a">1800</div>
<div class="t" style="left:1132px;top:666.0px;color:#32363a">1800</div>
<div class="t" style="left:1264px;top:666.0px;color:#32363a">MIN</div>
<div class="t" style="left:1337px;top:666.0px;color:#32363a">LID00</div>
<div class="t" style="left:1448px;top:666.0px;color:#32363a">Deckel ConBottle 0.5L</div>
<div class="t" style="left:1690.5px;top:666.0px;color:#32363a">600</div>
<div class="t" style="left:1798px;top:666.0px;color:#32363a">0</div>
<div class="t" style="left:1881px;top:666.0px;color:#32363a">ST</div>
<svg style="left:1990px;top:669px" width="20" height="18" viewBox="0 0 20 18"><path d="M1.5 10 L7.5 16.5 L18.5 2" fill="none" stroke="#337f35" stroke-width="2.9" stroke-linejoin="miter"/></svg>
<div class="a" style="left:47px;top:714.8px;width:24px;height:24px;background:#fff;border:3px solid #bdbdbd"></div>
<div class="t" style="left:83px;width:142px;text-align:right;top:714.4px;color:#32363a">1022252</div>
<div class="t" style="left:262px;top:715.5px;color:#32363a">0010</div>
<div class="t" style="left:389px;top:715.5px;color:#32363a">Assembly of Lid</div>
<div class="t" style="left:572.5px;top:715.5px;color:#32363a">29.8.2025, 11:34:33</div>
<div class="t" style="left:795px;top:715.5px;color:#32363a">2.9.2025, 06:14:33</div>
<div class="t" style="left:1018px;top:715.5px;color:#32363a">1500</div>
<div class="t" style="left:1132px;top:715.5px;color:#32363a">1500</div>
<div class="t" style="left:1264px;top:715.5px;color:#32363a">MIN</div>
<div class="t" style="left:1337px;top:715.5px;color:#32363a">LID00</div>
<div class="t" style="left:1448px;top:715.5px;color:#32363a">Deckel ConBottle 0.5L</div>
<div class="t" style="left:1690.5px;top:715.5px;color:#32363a">500</div>
<div class="t" style="left:1798px;top:715.5px;color:#32363a">0</div>
<div class="t" style="left:1881px;top:715.5px;color:#32363a">ST</div>
<svg style="left:1990px;top:718px" width="20" height="18" viewBox="0 0 20 18"><path d="M1.5 10 L7.5 16.5 L18.5 2" fill="none" stroke="#337f35" stroke-width="2.9" stroke-linejoin="miter"/></svg>
<div class="a" style="left:47px;top:764.4px;width:24px;height:24px;background:#fff;border:3px solid #bdbdbd"></div>
<div class="t" style="left:83px;width:142px;text-align:right;top:764.0px;color:#32363a">1023531</div>
<div class="t" style="left:262px;top:765.1px;color:#32363a">0010</div>
<div class="t" style="left:389px;top:765.1px;color:#32363a">Assembly of Lid</div>
<div class="t" style="left:572.5px;top:765.1px;color:#32363a">2.9.2025, 06:14:33</div>
<div class="t" style="left:795px;top:765.1px;color:#32363a">3.9.2025, 08:54:33</div>
<div class="t" style="left:1018px;top:765.1px;color:#32363a">1050</div>
<div class="t" style="left:1132px;top:765.1px;color:#32363a">1050</div>
<div class="t" style="left:1264px;top:765.1px;color:#32363a">MIN</div>
<div class="t" style="left:1337px;top:765.1px;color:#32363a">LID00</div>
<div class="t" style="left:1448px;top:765.1px;color:#32363a">Deckel ConBottle 0.5L</div>
<div class="t" style="left:1690.5px;top:765.1px;color:#32363a">350</div>
<div class="t" style="left:1798px;top:765.1px;color:#32363a">0</div>
<div class="t" style="left:1881px;top:765.1px;color:#32363a">ST</div>
<svg style="left:1990px;top:768px" width="20" height="18" viewBox="0 0 20 18"><path d="M1.5 10 L7.5 16.5 L18.5 2" fill="none" stroke="#337f35" stroke-width="2.9" stroke-linejoin="miter"/></svg>
<div class="a" style="left:47px;top:814.0px;width:24px;height:24px;background:#fff;border:3px solid #bdbdbd"></div>
<div class="t" style="left:83px;width:142px;text-align:right;top:813.6px;color:#32363a">1023533</div>
<div class="t" style="left:262px;top:814.7px;color:#32363a">0010</div>
<div class="t" style="left:389px;top:814.7px;color:#32363a">Assembly of Lid</div>
<div class="t" style="left:572.5px;top:814.7px;color:#32363a">3.9.2025, 08:54:33</div>
<div class="t" style="left:795px;top:814.7px;color:#32363a">4.9.2025, 11:34:33</div>
<div class="t" style="left:1018px;top:814.7px;color:#32363a">1050</div>
<div class="t" style="left:1132px;top:814.7px;color:#32363a">1050</div>
<div class="t" style="left:1264px;top:814.7px;color:#32363a">MIN</div>
<div class="t" style="left:1337px;top:814.7px;color:#32363a">LID00</div>
<div class="t" style="left:1448px;top:814.7px;color:#32363a">Deckel ConBottle 0.5L</div>
<div class="t" style="left:1690.5px;top:814.7px;color:#32363a">350</div>
<div class="t" style="left:1798px;top:814.7px;color:#32363a">0</div>
<div class="t" style="left:1881px;top:814.7px;color:#32363a">ST</div>
<svg style="left:1990px;top:817px" width="20" height="18" viewBox="0 0 20 18"><path d="M1.5 10 L7.5 16.5 L18.5 2" fill="none" stroke="#337f35" stroke-width="2.9" stroke-linejoin="miter"/></svg>
<div class="a" style="left:24px;top:850.53px;width:2510px;height:24.5px;background:#fdfdfd"></div>
<div class="a" style="left:2534px;top:850.53px;width:26px;height:24.5px;background:#f3f3f3"></div>
<div class="a" style="left:24px;top:850.53px;width:59px;height:24.5px;background:#f5f5f5"></div>
<div class="a" style="left:88.5px;top:859.03px;width:2258.0px;height:12px;border-radius:6px;background:#b3b3b3"></div>
<div class="a" style="left:2542px;top:409.5px;width:12.5px;height:355.0px;border-radius:6px;background:#b3b3b3"></div>
<div class="a" style="left:24px;top:875px;width:2536px;height:5px;background:#f7f8fa"></div>
<div class="a" style="left:24px;top:880px;width:2536px;height:24px;background:#cdd8e5"></div>
<div class="a" style="left:1178px;top:891px;width:90px;height:2px;background:linear-gradient(90deg,rgba(90,130,175,0),#4a76a8)"></div>
<div class="a" style="left:1316px;top:891px;width:90px;height:2px;background:linear-gradient(90deg,#4a76a8,rgba(90,130,175,0))"></div>
<div class="a" style="left:1281px;top:890.5px;width:3px;height:3px;background:#2f5581"></div>
<div class="a" style="left:1287px;top:890.5px;width:3px;height:3px;background:#2f5581"></div>
<div class="a" style="left:1293px;top:890.5px;width:3px;height:3px;background:#2f5581"></div>
<div class="a" style="left:1299px;top:890.5px;width:3px;height:3px;background:#2f5581"></div>
<div class="a" style="left:24px;top:904px;width:2536px;height:47px;background:#f7f8fa"></div>
<div class="t" style="left:30px;top:915px;font-size:23px;line-height:26px;letter-spacing:0.35px;color:#32363a">Geplant</div>
<div class="a" style="left:1535px;top:910px;width:1.5px;height:35px;background:#dfe1e3"></div>
<div class="t" style="left:1548px;top:915.5px;font-size:20.4px;color:#6a6d70">Ausgewählte Ressource</div>
<div class="a" style="left:1780px;top:909px;width:521px;height:38px;background:#fdfdfd;border:1.5px solid #c6c8ca"></div>
<div class="t" style="left:1793px;top:915px;font-size:20.6px;color:#000">1010 / COSPAC01: Verpackungsstation / Person</div>
<svg style="left:2266px;top:924px" width="19" height="11" viewBox="0 0 19 11"><path d="M1 1 L9.5 9.5 L18 1" fill="none" stroke="#3e5f87" stroke-width="1.8"/></svg>
<div class="a" style="left:2313px;top:910px;width:1.5px;height:35px;background:#dfe1e3"></div>
<svg style="left:2340px;top:917px" width="22" height="22" viewBox="0 0 22 22"><circle cx="9" cy="9" r="7.5" fill="none" stroke="#3e5f87" stroke-linecap="round" stroke-linejoin="round" stroke-width="1.9"/><path d="M14.5 14.5 L20 20" fill="none" stroke="#3e5f87" stroke-linecap="round" stroke-linejoin="round" stroke-width="2.6"/></svg>
<svg style="left:2398px;top:916px" width="24" height="24" viewBox="0 0 24 24"><path d="M6 1 H14 V6 M6 1 L1 6 V22 H14" fill="none" stroke="#3e5f87" stroke-linecap="round" stroke-linejoin="round" stroke-width="1.6"/><path d="M6 1 V6 H1" fill="#3e5f87"/><rect x="9" y="8" width="14" height="11" fill="#f7f8fa" stroke="#3e5f87" stroke-width="1.6"/><path d="M9 13.5 H23 M13.7 8 V19 M18.3 8 V19" stroke="#3e5f87" stroke-width="1.6"/></svg>
<svg style="left:2458px;top:916px" width="24" height="24" viewBox="0 0 24 24"><path d="M12 1 V17 M5.5 10.5 L12 17 L18.5 10.5" fill="none" stroke="#3e5f87" stroke-linecap="round" stroke-linejoin="round" stroke-width="1.7"/><path d="M2 23 H22" fill="none" stroke="#3e5f87" stroke-linecap="round" stroke-linejoin="round" stroke-width="2.6"/></svg>
<svg style="left:2518px;top:916px" width="24" height="24" viewBox="0 0 24 24"><path d="M22.76 9.71 L22.76 14.29 L19.60 15.07 L19.55 15.20 L21.23 17.99 L17.99 21.23 L15.20 19.55 L15.07 19.60 L14.29 22.76 L9.71 22.76 L8.93 19.60 L8.80 19.55 L6.01 21.23 L2.77 17.99 L4.45 15.20 L4.40 15.07 L1.24 14.29 L1.24 9.71 L4.40 8.93 L4.45 8.80 L2.77 6.01 L6.01 2.77 L8.80 4.45 L8.93 4.40 L9.71 1.24 L14.29 1.24 L15.07 4.40 L15.20 4.45 L17.99 2.77 L21.23 6.01 L19.55 8.80 L19.60 8.93 Z" fill="none" stroke="#3e5f87" stroke-linecap="round" stroke-linejoin="round" stroke-width="1.6"/><circle cx="12" cy="12" r="3.8" fill="none" stroke="#3e5f87" stroke-linecap="round" stroke-linejoin="round" stroke-width="1.7"/></svg>
<div class="a" style="left:24px;top:951px;width:2536px;height:52.4px;background:#f5f5f5"></div>
<div class="a" style="left:24px;top:951px;width:2536px;height:2px;background:#d5d7d9"></div>
<div class="a" style="left:24px;top:1003.4px;width:2536px;height:396.56px;background:#fdfdfd"></div>
<div class="a" style="left:24px;top:1003px;width:2535px;height:1px;background:#dcdcdc"></div>
<div class="a" style="left:24px;top:1052px;width:2510px;height:1px;background:#dcdcdc"></div>
<div class="a" style="left:24px;top:1102px;width:2510px;height:1px;background:#dcdcdc"></div>
<div class="a" style="left:24px;top:1152px;width:2510px;height:1px;background:#dcdcdc"></div>
<div class="a" style="left:24px;top:1201px;width:2510px;height:1px;background:#dcdcdc"></div>
<div class="a" style="left:24px;top:1251px;width:2510px;height:1px;background:#dcdcdc"></div>
<div class="a" style="left:24px;top:1300px;width:2510px;height:1px;background:#dcdcdc"></div>
<div class="a" style="left:24px;top:1350px;width:2510px;height:1px;background:#dcdcdc"></div>
<div class="a" style="left:24px;top:1399px;width:2510px;height:1px;background:#dcdcdc"></div>
<div class="a" style="left:24px;top:951px;width:1.5px;height:448.96000000000004px;background:#e0e0e0"></div>
<div class="a" style="left:83px;top:951px;width:1px;height:448.96000000000004px;background:#dadada"></div>
<div class="a" style="left:249px;top:951px;width:1px;height:448.96000000000004px;background:#dadada"></div>
<div class="a" style="left:376px;top:951px;width:1px;height:448.96000000000004px;background:#dadada"></div>
<div class="a" style="left:733px;top:951px;width:1px;height:448.96000000000004px;background:#dadada"></div>
<div class="a" style="left:955px;top:951px;width:1px;height:448.96000000000004px;background:#dadada"></div>
<div class="a" style="left:1179px;top:951px;width:1px;height:448.96000000000004px;background:#dadada"></div>
<div class="a" style="left:1292px;top:951px;width:1px;height:448.96000000000004px;background:#dadada"></div>
<div class="a" style="left:1424px;top:951px;width:1px;height:448.96000000000004px;background:#dadada"></div>
<div class="a" style="left:1498px;top:951px;width:1px;height:448.96000000000004px;background:#dadada"></div>
<div class="a" style="left:1689px;top:951px;width:1px;height:448.96000000000004px;background:#dadada"></div>
<div class="a" style="left:2008px;top:951px;width:1px;height:448.96000000000004px;background:#dadada"></div>
<div class="a" style="left:2116px;top:951px;width:1px;height:448.96000000000004px;background:#dadada"></div>
<div class="a" style="left:2198px;top:951px;width:1px;height:448.96000000000004px;background:#dadada"></div>
<div class="a" style="left:2307px;top:951px;width:1px;height:448.96000000000004px;background:#dadada"></div>
<div class="a" style="left:2447px;top:951px;width:1px;height:448.96000000000004px;background:#dadada"></div>
<div class="a" style="left:2534px;top:951px;width:1px;height:448.96000000000004px;background:#dadada"></div>
<div class="a" style="left:2558px;top:951px;width:1.5px;height:52.4px;background:#e0e0e0"></div>
<div class="a" style="left:47px;top:967.0px;width:24px;height:24px;background:#fff;border:3px solid #bdbdbd"></div>
<div class="t" style="left:96px;top:965.8px;color:#32363a">Order</div>
<div class="t" style="left:262px;top:965.8px;color:#32363a">Operation</div>
<div class="t" style="left:389px;top:965.8px;color:#32363a">OprShrtTxt</div>
<div class="t" style="left:746px;top:965.8px;color:#32363a">Opr. Start</div>
<div class="t" style="left:968.7px;top:965.8px;color:#32363a">Opr. End</div>
<div class="t" style="left:1192px;top:965.8px;color:#32363a">TrgtProc</div>
<div class="t" style="left:1305.5px;top:965.8px;color:#32363a">Rem.Proc.</div>
<div class="t" style="left:1437px;top:965.8px;color:#32363a">Unit</div>
<div class="t" style="left:1511px;top:965.8px;color:#32363a">Material</div>
<div class="t" style="left:1702px;top:965.8px;color:#32363a">Descr.</div>
<div class="t" style="left:2021.5px;top:965.8px;color:#32363a">Op. Qty</div>
<div class="t" style="left:2129px;top:965.8px;color:#32363a">Yield</div>
<div class="t" style="left:2211.7px;top:965.8px;color:#32363a">Op. unit</div>
<div class="t" style="left:2320.4px;top:965.8px;color:#32363a">Dispatched</div>
<div class="t" style="left:2460px;top:965.8px;width:74px;overflow:hidden;color:#32363a">Release</div>
<div class="a" style="left:47px;top:1016.4px;width:24px;height:24px;background:#fff;border:3px solid #bdbdbd"></div>
<div class="t" style="left:83px;width:142px;text-align:right;top:1016.0px;color:#32363a">1023526</div>
<div class="t" style="left:262px;top:1017.1px;color:#32363a">0020</div>
<div class="t" style="left:389px;top:1017.1px;color:#32363a">Assembly of ConBottle and Boxing</div>
<div class="t" style="left:746px;top:1017.1px;color:#32363a">22.8.2025, 11:34:33</div>
<div class="t" style="left:968.7px;top:1017.1px;color:#32363a">26.8.2025, 06:14:33</div>
<div class="t" style="left:1192px;top:1017.1px;color:#32363a">1500</div>
<div class="t" style="left:1305.5px;top:1017.1px;color:#32363a">1500</div>
<div class="t" style="left:1437px;top:1017.1px;color:#32363a">MIN</div>
<div class="t" style="left:1511px;top:1017.1px;color:#32363a">CONBOTTLE001</div>
<div class="t" style="left:1702px;top:1017.1px;color:#32363a">Verpackte ConBottle 0,5L Blau</div>
<div class="t" style="left:2021.5px;top:1017.1px;color:#32363a">750</div>
<div class="t" style="left:2129px;top:1017.1px;color:#32363a">0</div>
<div class="t" style="left:2211.7px;top:1017.1px;color:#32363a">ST</div>
<svg style="left:2320.4px;top:1020px" width="20" height="18" viewBox="0 0 20 18"><path d="M1.5 10 L7.5 16.5 L18.5 2" fill="none" stroke="#337f35" stroke-width="2.9" stroke-linejoin="miter"/></svg>
<div class="a" style="left:47px;top:1066.0px;width:24px;height:24px;background:#fff;border:3px solid #bdbdbd"></div>
<div class="t" style="left:83px;width:142px;text-align:right;top:1065.6px;color:#32363a">1022257</div>
<div class="t" style="left:262px;top:1066.7px;color:#32363a">0040</div>
<div class="t" style="left:389px;top:1066.7px;color:#32363a">Boxing of ConBottle</div>
<div class="t" style="left:746px;top:1066.7px;color:#32363a">26.8.2025, 06:14:33</div>
<div class="t" style="left:968.7px;top:1066.7px;color:#32363a">26.8.2025, 09:47:53</div>
<div class="t" style="left:1192px;top:1066.7px;color:#32363a">200</div>
<div class="t" style="left:1305.5px;top:1066.7px;color:#32363a">200</div>
<div class="t" style="left:1437px;top:1066.7px;color:#32363a">MIN</div>
<div class="t" style="left:1511px;top:1066.7px;color:#32363a">CONBOTTLE001</div>
<div class="t" style="left:1702px;top:1066.7px;color:#32363a">Verpackte ConBottle 0,5L Blau</div>
<div class="t" style="left:2021.5px;top:1066.7px;color:#32363a">100</div>
<div class="t" style="left:2129px;top:1066.7px;color:#32363a">0</div>
<div class="t" style="left:2211.7px;top:1066.7px;color:#32363a">ST</div>
<svg style="left:2320.4px;top:1069px" width="20" height="18" viewBox="0 0 20 18"><path d="M1.5 10 L7.5 16.5 L18.5 2" fill="none" stroke="#337f35" stroke-width="2.9" stroke-linejoin="miter"/></svg>
<div class="a" style="left:47px;top:1115.5px;width:24px;height:24px;background:#fff;border:3px solid #bdbdbd"></div>
<div class="t" style="left:83px;width:142px;text-align:right;top:1115.1px;color:#32363a">1022264</div>
<div class="t" style="left:262px;top:1116.2px;color:#32363a">0040</div>
<div class="t" style="left:389px;top:1116.2px;color:#32363a">Boxing of ConBottle</div>
<div class="t" style="left:746px;top:1116.2px;color:#32363a">26.8.2025, 09:47:53</div>
<div class="t" style="left:968.7px;top:1116.2px;color:#32363a">26.8.2025, 13:21:13</div>
<div class="t" style="left:1192px;top:1116.2px;color:#32363a">200</div>
<div class="t" style="left:1305.5px;top:1116.2px;color:#32363a">200</div>
<div class="t" style="left:1437px;top:1116.2px;color:#32363a">MIN</div>
<div class="t" style="left:1511px;top:1116.2px;color:#32363a">CONBOTTLE001</div>
<div class="t" style="left:1702px;top:1116.2px;color:#32363a">Verpackte ConBottle 0,5L Blau</div>
<div class="t" style="left:2021.5px;top:1116.2px;color:#32363a">100</div>
<div class="t" style="left:2129px;top:1116.2px;color:#32363a">0</div>
<div class="t" style="left:2211.7px;top:1116.2px;color:#32363a">ST</div>
<svg style="left:2320.4px;top:1119px" width="20" height="18" viewBox="0 0 20 18"><path d="M1.5 10 L7.5 16.5 L18.5 2" fill="none" stroke="#337f35" stroke-width="2.9" stroke-linejoin="miter"/></svg>
<div class="a" style="left:47px;top:1165.1px;width:24px;height:24px;background:#fff;border:3px solid #bdbdbd"></div>
<div class="t" style="left:83px;width:142px;text-align:right;top:1164.7px;color:#32363a">1023514</div>
<div class="t" style="left:262px;top:1165.8px;color:#32363a">0020</div>
<div class="t" style="left:389px;top:1165.8px;color:#32363a">Assembly of ConBottle and Boxing</div>
<div class="t" style="left:746px;top:1165.8px;color:#32363a">26.8.2025, 13:21:13</div>
<div class="t" style="left:968.7px;top:1165.8px;color:#32363a">27.8.2025, 09:47:53</div>
<div class="t" style="left:1192px;top:1165.8px;color:#32363a">700</div>
<div class="t" style="left:1305.5px;top:1165.8px;color:#32363a">700</div>
<div class="t" style="left:1437px;top:1165.8px;color:#32363a">MIN</div>
<div class="t" style="left:1511px;top:1165.8px;color:#32363a">CONBOTTLE001</div>
<div class="t" style="left:1702px;top:1165.8px;color:#32363a">Verpackte ConBottle 0,5L Blau</div>
<div class="t" style="left:2021.5px;top:1165.8px;color:#32363a">350</div>
<div class="t" style="left:2129px;top:1165.8px;color:#32363a">0</div>
<div class="t" style="left:2211.7px;top:1165.8px;color:#32363a">ST</div>
<svg style="left:2320.4px;top:1169px" width="20" height="18" viewBox="0 0 20 18"><path d="M1.5 10 L7.5 16.5 L18.5 2" fill="none" stroke="#337f35" stroke-width="2.9" stroke-linejoin="miter"/></svg>
<div class="a" style="left:47px;top:1214.7px;width:24px;height:24px;background:#fff;border:3px solid #bdbdbd"></div>
<div class="t" style="left:83px;width:142px;text-align:right;top:1214.3px;color:#32363a">1023513</div>
<div class="t" style="left:262px;top:1215.4px;color:#32363a">0040</div>
<div class="t" style="left:389px;top:1215.4px;color:#32363a">Boxing of ConBottle</div>
<div class="t" style="left:746px;top:1215.4px;color:#32363a">27.8.2025, 09:47:53</div>
<div class="t" style="left:968.7px;top:1215.4px;color:#32363a">27.8.2025, 18:41:13</div>
<div class="t" style="left:1192px;top:1215.4px;color:#32363a">500</div>
<div class="t" style="left:1305.5px;top:1215.4px;color:#32363a">500</div>
<div class="t" style="left:1437px;top:1215.4px;color:#32363a">MIN</div>
<div class="t" style="left:1511px;top:1215.4px;color:#32363a">CONBOTTLE001</div>
<div class="t" style="left:1702px;top:1215.4px;color:#32363a">Verpackte ConBottle 0,5L Blau</div>
<div class="t" style="left:2021.5px;top:1215.4px;color:#32363a">250</div>
<div class="t" style="left:2129px;top:1215.4px;color:#32363a">0</div>
<div class="t" style="left:2211.7px;top:1215.4px;color:#32363a">ST</div>
<svg style="left:2320.4px;top:1218px" width="20" height="18" viewBox="0 0 20 18"><path d="M1.5 10 L7.5 16.5 L18.5 2" fill="none" stroke="#337f35" stroke-width="2.9" stroke-linejoin="miter"/></svg>
<div class="a" style="left:47px;top:1264.2px;width:24px;height:24px;background:#fff;border:3px solid #bdbdbd"></div>
<div class="t" style="left:83px;width:142px;text-align:right;top:1263.8px;color:#32363a">1023523</div>
<div class="t" style="left:262px;top:1265.0px;color:#32363a">0020</div>
<div class="t" style="left:389px;top:1265.0px;color:#32363a">Assembly of ConBottle and Boxing</div>
<div class="t" style="left:746px;top:1265.0px;color:#32363a">27.8.2025, 18:41:13</div>
<div class="t" style="left:968.7px;top:1265.0px;color:#32363a">28.8.2025, 15:07:53</div>
<div class="t" style="left:1192px;top:1265.0px;color:#32363a">700</div>
<div class="t" style="left:1305.5px;top:1265.0px;color:#32363a">700</div>
<div class="t" style="left:1437px;top:1265.0px;color:#32363a">MIN</div>
<div class="t" style="left:1511px;top:1265.0px;color:#32363a">CONBOTTLE001</div>
<div class="t" style="left:1702px;top:1265.0px;color:#32363a">Verpackte ConBottle 0,5L Blau</div>
<div class="t" style="left:2021.5px;top:1265.0px;color:#32363a">350</div>
<div class="t" style="left:2129px;top:1265.0px;color:#32363a">0</div>
<div class="t" style="left:2211.7px;top:1265.0px;color:#32363a">ST</div>
<svg style="left:2320.4px;top:1268px" width="20" height="18" viewBox="0 0 20 18"><path d="M1.5 10 L7.5 16.5 L18.5 2" fill="none" stroke="#337f35" stroke-width="2.9" stroke-linejoin="miter"/></svg>
<div class="a" style="left:47px;top:1313.8px;width:24px;height:24px;background:#fff;border:3px solid #bdbdbd"></div>
<div class="t" style="left:83px;width:142px;text-align:right;top:1313.4px;color:#32363a">1023529</div>
<div class="t" style="left:262px;top:1314.5px;color:#32363a">0020</div>
<div class="t" style="left:389px;top:1314.5px;color:#32363a">Assembly of ConBottle and Boxing</div>
<div class="t" style="left:746px;top:1314.5px;color:#32363a">28.8.2025, 15:07:53</div>
<div class="t" style="left:968.7px;top:1314.5px;color:#32363a">29.8.2025, 11:34:33</div>
<div class="t" style="left:1192px;top:1314.5px;color:#32363a">700</div>
<div class="t" style="left:1305.5px;top:1314.5px;color:#32363a">700</div>
<div class="t" style="left:1437px;top:1314.5px;color:#32363a">MIN</div>
<div class="t" style="left:1511px;top:1314.5px;color:#32363a">CONBOTTLE001</div>
<div class="t" style="left:1702px;top:1314.5px;color:#32363a">Verpackte ConBottle 0,5L Blau</div>
<div class="t" style="left:2021.5px;top:1314.5px;color:#32363a">350</div>
<div class="t" style="left:2129px;top:1314.5px;color:#32363a">0</div>
<div class="t" style="left:2211.7px;top:1314.5px;color:#32363a">ST</div>
<svg style="left:2320.4px;top:1317px" width="20" height="18" viewBox="0 0 20 18"><path d="M1.5 10 L7.5 16.5 L18.5 2" fill="none" stroke="#337f35" stroke-width="2.9" stroke-linejoin="miter"/></svg>
<div class="a" style="left:47px;top:1363.4px;width:24px;height:24px;background:#fff;border:3px solid #bdbdbd"></div>
<div class="t" style="left:83px;width:142px;text-align:right;top:1363.0px;color:#32363a">1023515</div>
<div class="t" style="left:262px;top:1364.1px;color:#32363a">0020</div>
<div class="t" style="left:389px;top:1364.1px;color:#32363a">Assembly of ConBottle and Boxing</div>
<div class="t" style="left:746px;top:1364.1px;color:#32363a">29.8.2025, 11:34:33</div>
<div class="t" style="left:968.7px;top:1364.1px;color:#32363a">1.9.2025, 08:01:13</div>
<div class="t" style="left:1192px;top:1364.1px;color:#32363a">700</div>
<div class="t" style="left:1305.5px;top:1364.1px;color:#32363a">700</div>
<div class="t" style="left:1437px;top:1364.1px;color:#32363a">MIN</div>
<div class="t" style="left:1511px;top:1364.1px;color:#32363a">CONBOTTLE001</div>
<div class="t" style="left:1702px;top:1364.1px;color:#32363a">Verpackte ConBottle 0,5L Blau</div>
<div class="t" style="left:2021.5px;top:1364.1px;color:#32363a">350</div>
<div class="t" style="left:2129px;top:1364.1px;color:#32363a">0</div>
<div class="t" style="left:2211.7px;top:1364.1px;color:#32363a">ST</div>
<svg style="left:2320.4px;top:1367px" width="20" height="18" viewBox="0 0 20 18"><path d="M1.5 10 L7.5 16.5 L18.5 2" fill="none" stroke="#337f35" stroke-width="2.9" stroke-linejoin="miter"/></svg>
<div class="a" style="left:24px;top:1399.96px;width:2510px;height:24.5px;background:#fdfdfd"></div>
<div class="a" style="left:2534px;top:1399.96px;width:26px;height:24.5px;background:#f3f3f3"></div>
<div class="a" style="left:24px;top:1399.96px;width:59px;height:24.5px;background:#f5f5f5"></div>
<div class="a" style="left:88.5px;top:1408.46px;width:1909.0px;height:12px;border-radius:6px;background:#b3b3b3"></div>
<div class="a" style="left:2542px;top:1008.5px;width:12.5px;height:176.5px;border-radius:6px;background:#b3b3b3"></div>
<div class="a" style="left:0;top:1541px;width:2560px;height:62px;background:#313c48"></div>
<div class="a" style="left:0;top:1601px;width:2560px;height:2px;background:#4a5666"></div>
<svg style="left:18px;top:1561px" width="24" height="24" viewBox="0 0 24 24"><path d="M6.72 19.10 L6.29 19.47 L5.85 19.82 L5.40 20.17 L4.93 20.50 L4.78 20.38 L4.63 20.27 L4.48 20.15 L4.33 20.03 L4.18 19.90 L4.04 19.77 L3.90 19.64 L3.76 19.51 L3.62 19.38 L3.49 19.24 L3.36 19.10 L3.23 18.96 L3.10 18.82 L2.97 18.67 L2.85 18.52 L2.73 18.37 L2.62 18.22 L2.50 18.07 L2.83 17.60 L3.18 17.15 L3.53 16.71 L3.90 16.28 L4.29 15.87 L4.21 15.75 L4.14 15.62 L4.07 15.50 L4.00 15.37 L3.94 15.24 L3.88 15.11 L3.82 14.98 L3.76 14.84 L3.70 14.71 L3.65 14.57 L3.60 14.44 L3.55 14.30 L3.51 14.16 L3.46 14.03 L3.42 13.89 L3.38 13.75 L3.35 13.61 L2.79 13.59 L2.22 13.55 L1.66 13.49 L1.10 13.42 L0.54 13.32 L0.51 13.13 L0.48 12.94 L0.46 12.75 L0.44 12.56 L0.43 12.37 L0.42 12.18 L0.41 11.98 L0.40 11.79 L0.40 11.60 L0.40 11.41 L0.41 11.22 L0.42 11.02 L0.43 10.83 L0.44 10.64 L0.46 10.45 L0.48 10.26 L0.51 10.07 L0.54 9.88 L1.10 9.78 L1.66 9.71 L2.22 9.65 L2.79 9.61 L3.35 9.59 L3.38 9.45 L3.42 9.31 L3.46 9.17 L3.51 9.04 L3.55 8.90 L3.60 8.76 L3.65 8.63 L3.70 8.49 L3.76 8.36 L3.82 8.22 L3.88 8.09 L3.94 7.96 L4.00 7.83 L4.07 7.70 L4.14 7.58 L4.21 7.45 L4.29 7.33 L3.90 6.92 L3.53 6.49 L3.18 6.05 L2.83 5.60 L2.50 5.13 L2.62 4.98 L2.73 4.83 L2.85 4.68 L2.97 4.53 L3.10 4.38 L3.23 4.24 L3.36 4.10 L3.49 3.96 L3.62 3.82 L3.76 3.69 L3.90 3.56 L4.04 3.43 L4.18 3.30 L4.33 3.17 L4.48 3.05 L4.63 2.93 L4.78 2.82 L4.93 2.70 L5.40 3.03 L5.85 3.38 L6.29 3.73 L6.72 4.10 L7.13 4.49 L7.25 4.41 L7.38 4.34 L7.50 4.27 L7.63 4.20 L7.76 4.14 L7.89 4.08 L8.02 4.02 L8.16 3.96 L8.29 3.90 L8.43 3.85 L8.56 3.80 L8.70 3.75 L8.84 3.71 L8.97 3.66 L9.11 3.62 L9.25 3.58 L9.39 3.55 L9.41 2.99 L9.45 2.42 L9.51 1.86 L9.58 1.30 L9.68 0.74 L9.87 0.71 L10.06 0.68 L10.25 0.66 L10.44 0.64 L10.63 0.63 L10.82 0.62 L11.02 0.61 L11.21 0.60 L11.40 0.60 L11.59 0.60 L11.78 0.61 L11.98 0.62 L12.17 0.63 L12.36 0.64 L12.55 0.66 L12.74 0.68 L12.93 0.71 L13.12 0.74 L13.22 1.30 L13.29 1.86 L13.35 2.42 L13.39 2.99 L13.41 3.55 L13.55 3.58 L13.69 3.62 L13.83 3.66 L13.96 3.71 L14.10 3.75 L14.24 3.80 L14.37 3.85 L14.51 3.90 L14.64 3.96 L14.78 4.02 L14.91 4.08 L15.04 4.14 L15.17 4.20 L15.30 4.27 L15.42 4.34 L15.55 4.41 L15.67 4.49 L16.08 4.10 L16.51 3.73 L16.95 3.38 L17.40 3.03 L17.87 2.70 L18.02 2.82 L18.17 2.93 L18.32 3.05 L18.47 3.17 L18.62 3.30 L18.76 3.43 L18.90 3.56 L19.04 3.69 L19.18 3.82 L19.31 3.96 L19.44 4.10 L19.57 4.24 L19.70 4.38 L19.83 4.53 L19.95 4.68 L20.07 4.83" fill="none" stroke="#d8e6f5" stroke-linecap="round" stroke-linejoin="round" stroke-width="1.5"/><path d="M9.8 8.3 A4.6 4.6 0 0 0 9.8 15.2" fill="none" stroke="#d8e6f5" stroke-linecap="round" stroke-linejoin="round" stroke-width="1.5"/><circle cx="16.4" cy="11.1" r="3.9" fill="none" stroke="#d8e6f5" stroke-linecap="round" stroke-linejoin="round" stroke-width="1.6"/><path d="M9.8 23.4 V19.5 C9.8 17 12 15.8 16.4 15.8 C20.8 15.8 23.2 17 23.2 19.5 V23.4 Z" fill="none" stroke="#d8e6f5" stroke-linecap="round" stroke-linejoin="round" stroke-width="1.6"/><path d="M16.4 20.2 H19.8" fill="none" stroke="#d8e6f5" stroke-linecap="round" stroke-linejoin="round" stroke-width="1.7"/></svg>
<div class="a" style="left:2308px;top:1554px;width:116px;height:38px;border-radius:4px;background:#465568;border:2px solid #aadc9f"></div>
<div class="t" style="left:2308px;top:1561px;width:116px;text-align:center;color:#b6e3a9;-webkit-text-stroke:0.3px #b6e3a9">Speichern</div>
<div class="a" style="left:2430px;top:1554px;width:124px;height:38px;border-radius:4px;background:#465568;border:2px solid #ea8a8a"></div>
<div class="t" style="left:2430px;top:1561px;width:124px;text-align:center;color:#f08c8c;-webkit-text-stroke:0.3px #f08c8c">Abbrechen</div>
<svg style="left:2300px;top:1280px" width="260" height="260" viewBox="2300 1280 260 260"><defs><filter id="hb" x="-20%" y="-20%" width="140%" height="140%"><feGaussianBlur stdDeviation="4"/></filter></defs><g filter="url(#hb)" opacity="0.085" fill="#000" stroke="#000" stroke-width="20" stroke-linejoin="round"><path d="M2355.5 1314.5 H2545 V1408.5 H2529 L2514.7 1422.5 L2500 1408.5 H2355.5 Z"/><path d="M2362 1412 H2540 V1440 H2362 Z" stroke-width="6"/><path d="M2356 1444.5 H2545 V1513 H2356 Z"/></g><path d="M2355.5 1314.5 H2545 V1408.5 H2529 L2514.7 1422.5 L2500 1408.5 H2355.5 Z" fill="#fdfdfd"/></svg>
<div class="t" style="left:2375px;top:1330px;font-size:23.5px;line-height:28px;color:#7c7c7c">Come speak<br>to me!</div>
<div class="a" style="left:2356px;top:1444px;width:189px;height:69px;border-radius:4px;background:#5d8fdb"></div>
<svg style="left:2380px;top:1455px" width="46" height="46" viewBox="0 0 46 46"><ellipse cx="14.8" cy="31.8" rx="14.6" ry="13.6" fill="#fff"/><path d="M2.5 37.5 L1.2 45.8 L10 42.5 Z" fill="#fff"/><circle cx="25.6" cy="19.1" r="21.4" fill="#5d8fdb"/><circle cx="25.6" cy="19.1" r="18.6" fill="#fff"/><path d="M38.5 29.5 L43 39 L33 35.5 Z" fill="#fff"/></svg>
<div class="t" style="left:2437px;top:1465px;font-size:23px;line-height:28px;color:#fff">conBOT</div></body></html>
